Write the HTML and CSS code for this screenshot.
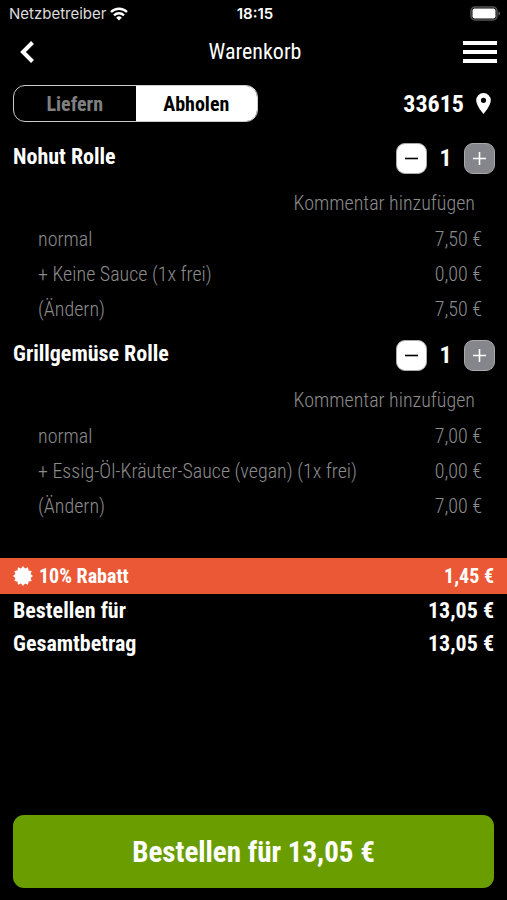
FILE: index.html
```html
<!DOCTYPE html>
<html lang="de">
<head>
  <meta charset="UTF-8" />
  <meta name="viewport" content="width=device-width, initial-scale=1" />
  <title>Warenkorb</title>
  <link rel="stylesheet" href="styles.css">
</head>
<body>
  <!-- Status bar -->
  <div class="status">
    <span class="carrier">Netzbetreiber
      <svg class="wifi" width="18" height="14" viewBox="0 0 18 14" fill="none" stroke="#fff" stroke-width="2.4" aria-hidden="true">
        <path d="M1 5a11.4 11.4 0 0 1 16 0" />
        <path d="M4 8.300a7.200 7.200 0 0 1 10 0" />
        <path d="M9 13.500 6.200 10.700a4 4 0 0 1 5.600 0z" fill="#fff" stroke="none" />
      </svg>
    </span>
    <span class="clock">18:15</span>
    <svg class="battery" width="31" height="15" viewBox="0 0 31 15" aria-hidden="true">
      <rect x="1" y="1" width="26" height="13" rx="4" fill="none" stroke="#555" stroke-width="1.500" />
      <rect x="2.500" y="2.500" width="23" height="10" rx="2" fill="#fff" />
      <path d="M28.500 5.500c2 .5 2 3.500 0 4z" fill="#666" />
    </svg>
  </div>

  <header class="navbar">
    <button type="button" class="icon-btn" aria-label="Zurück">
      <svg width="28" height="24" viewBox="0 0 28 24" fill="none" stroke="#fff" stroke-width="4" aria-hidden="true">
        <path d="M19.500 2.500 10 12l9.500 9.500" />
      </svg>
    </button>
    <h1>Warenkorb</h1>
    <button type="button" class="icon-btn menu" aria-label="Menü">
      <svg width="34" height="24" viewBox="0 0 34 24" fill="#fff" aria-hidden="true">
        <path d="M0 1h34v4H0zM0 10h34v4H0zM0 19h34v4H0z" />
      </svg>
    </button>
  </header>

  <main>
    <div class="delivery">
      <div class="toggle" role="radiogroup" aria-label="Bestellart">
        <input type="radio" id="liefern" name="mode" />
        <label for="liefern">Liefern</label>
        <input type="radio" id="abholen" name="mode" checked />
        <label for="abholen">Abholen</label>
      </div>
      <a href="#" class="zip">33615
        <svg width="15" height="21" viewBox="0 0 15 21" fill="#fff" aria-hidden="true">
          <path fill-rule="evenodd" d="M7.500 0A7.300 7.300 0 0 0 .2 7.300C.2 12.800 7.500 21 7.500 21s7.300-8.200 7.300-13.700A7.300 7.300 0 0 0 7.500 0zm0 4.700a2.600 2.600 0 1 1 0 5.200 2.600 2.600 0 0 1 0-5.200z" />
        </svg>
      </a>
    </div>

    <section class="item">
      <div class="item-head">
        <h2>Nohut Rolle</h2>
        <div class="stepper">
          <button type="button" class="step minus" aria-label="Weniger">
            <svg width="13" height="13" viewBox="0 0 13 13" stroke="currentColor" stroke-width="1.6" aria-hidden="true"><path d="M0 6.500h13" /></svg>
          </button>
          <output>1</output>
          <button type="button" class="step plus" aria-label="Mehr">
            <svg width="13" height="13" viewBox="0 0 13 13" stroke="currentColor" stroke-width="1.6" aria-hidden="true"><path d="M0 6.500h13M6.500 0v13" /></svg>
          </button>
        </div>
      </div>
      <button type="button" class="comment">Kommentar hinzufügen</button>
      <table class="options">
        <tr><td>normal</td><td>7,50 €</td></tr>
        <tr><td>+ Keine Sauce (1x frei)</td><td>0,00 €</td></tr>
        <tr><td><a href="#">(Ändern)</a></td><td>7,50 €</td></tr>
      </table>
    </section>

    <section class="item">
      <div class="item-head">
        <h2>Grillgemüse Rolle</h2>
        <div class="stepper">
          <button type="button" class="step minus" aria-label="Weniger">
            <svg width="13" height="13" viewBox="0 0 13 13" stroke="currentColor" stroke-width="1.6" aria-hidden="true"><path d="M0 6.500h13" /></svg>
          </button>
          <output>1</output>
          <button type="button" class="step plus" aria-label="Mehr">
            <svg width="13" height="13" viewBox="0 0 13 13" stroke="currentColor" stroke-width="1.6" aria-hidden="true"><path d="M0 6.500h13M6.500 0v13" /></svg>
          </button>
        </div>
      </div>
      <button type="button" class="comment">Kommentar hinzufügen</button>
      <table class="options">
        <tr><td>normal</td><td>7,00 €</td></tr>
        <tr><td>+ Essig-Öl-Kräuter-Sauce (vegan) (1x frei)</td><td>0,00 €</td></tr>
        <tr><td><a href="#">(Ändern)</a></td><td>7,00 €</td></tr>
      </table>
    </section>

    <!-- Discount and totals -->
    <div class="discount">
      <svg width="20" height="20" viewBox="0 0 20 20" fill="#fff" aria-hidden="true">
        <path d="M10 0 12 2.400 15 1.300 15.600 4.400 18.700 5 17.600 8 20 10 17.600 12 18.700 15 15.600 15.600 15 18.700 12 17.600 10 20 8 17.600 5 18.700 4.400 15.600 1.300 15 2.400 12 0 10 2.400 8 1.300 5 4.400 4.400 5 1.300 8 2.400z" />
      </svg>
      <span>10% Rabatt</span>
      <span class="amount">1,45 €</span>
    </div>
    <div class="total"><span>Bestellen für</span><span>13,05 €</span></div>
    <div class="total"><span>Gesamtbetrag</span><span>13,05 €</span></div>
  </main>

  <footer>
    <button type="button" class="order">Bestellen für 13,05 €</button>
  </footer>
</body>
</html>
```

FILE: styles.css
```css
* {
  box-sizing: border-box;
}
body {
  margin: 0;
  min-height: 100vh;
  display: flex;
  flex-direction: column;
  background: #000;
  color: #fff;
  font-family: "Roboto Condensed", "Liberation Sans Narrow", Roboto, sans-serif;
  font-size: 20px;
}
h1, h2 {
  margin: 0;
}
button {
  padding: 0;
  border: none;
  background: none;
  color: inherit;
  font: inherit;
  cursor: pointer;
}
a {
  color: inherit;
  text-decoration: none;
}
svg {
  display: block;
}
.status {
  display: grid;
  grid-template-columns: 1fr auto 1fr;
  align-items: center;
  height: 27px;
  padding: 0 6px 0 9px;
  font-family: Inter, sans-serif;
  font-size: 15px;
}
.carrier {
  display: flex;
  align-items: center;
  gap: 4px;
  color: #ddd;
}
.clock {
  font-weight: 600;
}
.battery {
  justify-self: end;
}
.navbar {
  display: grid;
  grid-template-columns: 1fr auto 1fr;
  align-items: center;
  height: 49px;
  padding: 0 10px 0 13px;
}
.navbar h1 {
  font-size: 22px;
  font-weight: 400;
}
.menu {
  justify-self: end;
}
main {
  flex: 1;
}
.delivery {
  display: flex;
  justify-content: space-between;
  align-items: center;
  padding: 9px 16px 21px 13px;
}
.toggle {
  display: grid;
  grid-template-columns: 1fr 1fr;
  flex: 0 1 245px;
  height: 37px;
  border: 1px solid #ccc;
  border-radius: 12px;
  overflow: hidden;
  position: relative;
}
.toggle input {
  position: absolute;
  opacity: 0;
}
.toggle label {
  display: flex;
  align-items: center;
  justify-content: center;
  color: #808080;
  font-weight: 700;
  cursor: pointer;
}
.toggle input:checked + label {
  background: #fff;
  color: #000;
}
.zip {
  display: flex;
  align-items: center;
  gap: 12px;
  font-size: 24px;
  font-weight: 700;
}
.item {
  display: flex;
  flex-direction: column;
  padding: 0 12px 14px 13px;
}
.item-head {
  display: flex;
  justify-content: space-between;
  align-items: flex-start;
  height: 42px;
}
.item h2 {
  font-size: 22px;
  font-weight: 700;
  line-height: 28px;
}
.stepper {
  display: flex;
  align-items: center;
  font-size: 24px;
  font-weight: 700;
}
.stepper output {
  width: 37px;
  text-align: center;
  line-height: 31px;
}
.step {
  display: flex;
  align-items: center;
  justify-content: center;
  width: 31px;
  height: 31px;
  border: 1px solid #aaa;
  border-radius: 9px;
}
.minus {
  background: #fff;
  color: #000;
}
.plus {
  background: #85858c;
}
.comment {
  align-self: flex-end;
  height: 36px;
  margin-right: 20px;
  color: #8c8c8c;
  font-weight: 300;
}
.options {
  width: 100%;
  padding: 0 13px 0 25px;
  border-spacing: 0;
  color: #8c8c8c;
  font-weight: 300;
}
.options td {
  height: 35px;
  padding: 0;
}
.options td:last-child {
  text-align: right;
}
.discount {
  display: flex;
  align-items: center;
  gap: 6px;
  height: 36px;
  margin-top: 21px;
  padding: 0 13px;
  background: #eb5836;
  font-weight: 700;
}
.amount {
  margin-left: auto;
}
.total {
  display: flex;
  justify-content: space-between;
  padding: 0 13px;
  font-size: 22px;
  font-weight: 700;
  line-height: 33px;
}
footer {
  padding: 12px 13px;
}
.order {
  width: 100%;
  height: 73px;
  border-radius: 11px;
  background: #6a9e00;
  font-size: 29px;
  font-weight: 700;
}
```
